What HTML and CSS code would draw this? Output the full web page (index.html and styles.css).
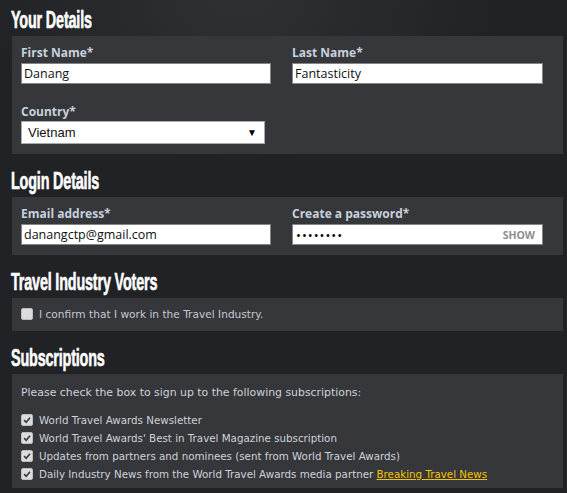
FILE: index.html
```html
<!DOCTYPE html>
<html lang="en">
<head>
  <meta charset="UTF-8">
  <meta name="viewport" content="width=device-width, initial-scale=1.0">
  <title>Register | World Travel Awards</title>
  <link rel="stylesheet" href="styles.css">
</head>
<body>

  <div class="form">

    <div class="section">
      <h2><span>Your Details</span></h2>
      <div class="panel">
        <div class="fields">
          <div class="field">
            <label for="first">First Name*</label>
            <input type="text" id="first" value="Danang">
          </div>
          <div class="field">
            <label for="last">Last Name*</label>
            <input type="text" id="last" value="Fantasticity">
          </div>
          <div class="field">
            <label for="country">Country*</label>
            <div class="select">
              <span>Vietnam</span>
              <span class="arrow">&#9660;</span>
            </div>
          </div>
        </div>
      </div>
    </div>

    <div class="section">
      <h2><span>Login Details</span></h2>
      <div class="panel">
        <div class="fields">
          <div class="field">
            <label for="email">Email address*</label>
            <input type="text" id="email" value="danangctp@gmail.com">
          </div>
          <div class="field">
            <label for="password">Create a password*</label>
            <div class="password">
              <span class="dots">&#8226;&#8226;&#8226;&#8226;&#8226;&#8226;&#8226;&#8226;</span>
              <span class="show">SHOW</span>
            </div>
          </div>
        </div>
      </div>
    </div>

    <div class="section">
      <h2><span>Travel Industry Voters</span></h2>
      <div class="panel panel-single">
        <div class="check-row">
          <span class="box"></span>
          <span>I confirm that I work in the Travel Industry.</span>
        </div>
      </div>
    </div>

    <div class="section">
      <h2><span>Subscriptions</span></h2>
      <div class="panel panel-subs">
        <p class="intro">Please check the box to sign up to the following subscriptions:</p>
        <div class="check-row">
          <span class="box checked"><svg viewBox="0 0 12 12"><path d="M2.5 6.2 L5 8.7 L9.6 3.2"/></svg></span>
          <span>World Travel Awards Newsletter</span>
        </div>
        <div class="check-row">
          <span class="box checked"><svg viewBox="0 0 12 12"><path d="M2.5 6.2 L5 8.7 L9.6 3.2"/></svg></span>
          <span>World Travel Awards' Best in Travel Magazine subscription</span>
        </div>
        <div class="check-row">
          <span class="box checked"><svg viewBox="0 0 12 12"><path d="M2.5 6.2 L5 8.7 L9.6 3.2"/></svg></span>
          <span>Updates from partners and nominees (sent from World Travel Awards)</span>
        </div>
        <div class="check-row">
          <span class="box checked"><svg viewBox="0 0 12 12"><path d="M2.5 6.2 L5 8.7 L9.6 3.2"/></svg></span>
          <span>Daily Industry News from the World Travel Awards media partner <a href="#">Breaking Travel News</a></span>
        </div>
      </div>
    </div>

  </div>

</body>
</html>
```

FILE: styles.css
```css
body {
  margin: 0;
  min-height: 493px;
  background-color: #202226;
  background-image: radial-gradient(ellipse 260px 160px at 240px 0, #2f3034 0%, #202226 100%);
  background-repeat: no-repeat;
  font-family: 'DejaVu Sans', Verdana, sans-serif;
  color: #cdd3da;
}
.form {
  padding: 6px 4px 8px 12px;
}
.section + .section {
  margin-top: 13px;
}
h2 {
  margin: 0 0 2px -1px;
  height: 28px;
  line-height: 28px;
  font-family: 'Liberation Sans Narrow', 'Liberation Sans', sans-serif;
  font-size: 24px;
  font-weight: bold;
  color: #ffffff;
  white-space: nowrap;
  -webkit-text-stroke: 0.6px #ffffff;
}
h2 span {
  display: inline-block;
  transform: scaleX(0.6);
  transform-origin: left center;
  letter-spacing: -0.3px;
}
.panel {
  background-color: #36373b;
  padding: 9px 20px 10px 9px;
}
.fields {
  display: grid;
  grid-template-columns: 250px 251px;
  column-gap: 21px;
  row-gap: 20px;
}
.field label {
  display: block;
  font-family: 'Open Sans', sans-serif;
  font-weight: bold;
  font-size: 12px;
  line-height: 16px;
  color: #c7d1dd;
  margin-bottom: 2px;
}
.field input, .password {
  box-sizing: border-box;
  display: block;
  width: 100%;
  height: 21px;
  margin: 0;
  padding: 0 2px;
  border: 1px solid #858585;
  background: #ffffff;
  font-family: 'Open Sans', sans-serif;
  font-size: 12.5px;
  color: #111;
  outline: none;
}
.select {
  box-sizing: border-box;
  width: 244px;
  height: 23px;
  margin-top: -1px;
  padding: 0 7px 0 6px;
  border: 1px solid #a9a9a9;
  background: #ffffff;
  display: flex;
  align-items: center;
  justify-content: space-between;
  font-family: 'Liberation Sans', Arial, sans-serif;
  font-size: 13px;
  color: #111;
}
.select .arrow {
  font-size: 10px;
  color: #000;
}
.password {
  display: flex;
  align-items: center;
  justify-content: space-between;
  padding: 0 7px 0 3px;
}
.dots {
  font-size: 13px;
  letter-spacing: 1px;
  color: #000;
}
.show {
  font-family: 'Open Sans', sans-serif;
  font-weight: bold;
  font-size: 10.5px;
  color: #8c8c8c;
}
.panel-single {
  padding: 9px 20px 11px 9px;
}
.panel-subs {
  padding: 12px 20px 5px 9px;
}
.intro {
  margin: 0 0 11px;
  font-size: 10.9px;
  line-height: 14px;
}
.check-row {
  display: flex;
  align-items: center;
  height: 18px;
  font-size: 10.3px;
  color: #cdd3da;
}
.panel-single .check-row {
  height: 13px;
  font-size: 10.6px;
  color: #c3cad2;
}
.box {
  box-sizing: border-box;
  width: 12px;
  height: 12px;
  margin: 0 6px 0 0;
  flex: none;
  border: 1px solid #bdbdbd;
  border-radius: 2px;
  background: #dcdcdc;
  display: flex;
}
.box svg {
  width: 10px;
  height: 10px;
  fill: none;
  stroke: #3c3c3c;
  stroke-width: 2;
}
a {
  color: #f5c400;
}
```
